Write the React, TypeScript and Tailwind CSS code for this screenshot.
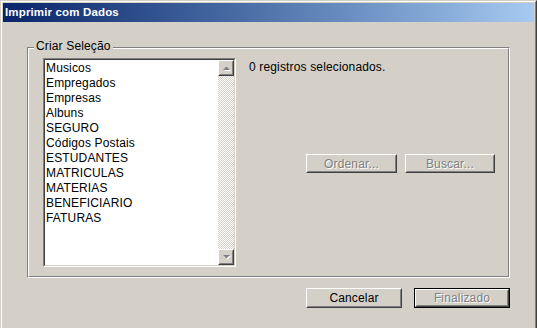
import React from 'react'

const tables = [
  'Musicos',
  'Empregados',
  'Empresas',
  'Albuns',
  'SEGURO',
  'Códigos Postais',
  'ESTUDANTES',
  'MATRICULAS',
  'MATERIAS',
  'BENEFICIARIO',
  'FATURAS',
]

// classic raised 3D button face
function Raised({ className, children }: { className: string; children: React.ReactNode }) {
  return (
    <div className={`border border-t-white border-l-white border-r-[#404040] border-b-[#404040] bg-[#d4d0c8] ${className}`}>
      <div className="h-full border border-t-transparent border-l-transparent border-r-[#808080] border-b-[#808080] flex items-center justify-center">
        {children}
      </div>
    </div>
  )
}

function Arrow({ up }: { up?: boolean }) {
  return (
    <svg width="7" height="5" viewBox="0 0 7 5" className="overflow-visible">
      <polygon points={up ? '4.5,1.5 8,5 1,5' : '1,1 8,1 4.5,4.5'} fill="#ffffff" />
      <polygon points={up ? '3.5,0.5 7,4 0,4' : '0,0 7,0 3.5,3.5'} fill="#808080" />
    </svg>
  )
}

export default function App() {
  return (
    <div className="w-[537px] h-[328px] overflow-hidden bg-[#d4d0c8] border-l border-t border-r border-l-[#d4d0c8] border-t-[#d4d0c8] border-r-[#404040] font-['Liberation_Sans',Arial,sans-serif] text-[12px] tracking-[0.15px] text-black">
      <div className="h-full border-l border-t border-r border-l-white border-t-white border-r-[#808080] p-px">
        {/* Title bar */}
        <div className="h-[19px] bg-linear-to-r from-[#0a246a] to-[#a6caf0] flex items-center pl-[2px]">
          <span className="text-white font-bold text-[11.5px] leading-none">Imprimir com Dados</span>
        </div>

        <div className="pl-[24px] pt-[25px]">
          {/* Group box */}
          <div className="relative w-[483px] h-[231px] border border-t-[#808080] border-l-[#808080] border-r-white border-b-white">
            <span className="absolute -top-[9px] left-[6px] px-[2px] bg-[#d4d0c8] leading-[15px]">Criar Seleção</span>
            <div className="h-full border border-t-white border-l-white border-r-[#808080] border-b-[#808080] flex pt-[9px] pl-[14px]">
              {/* List box */}
              <div className="w-[193px] h-[209px] border border-t-[#808080] border-l-[#808080] border-r-white border-b-white">
                <div className="h-full border border-t-[#404040] border-l-[#404040] border-r-[#d4d0c8] border-b-[#d4d0c8] bg-white flex">
                  <ul className="flex-1 leading-[15px] pl-px pt-px">
                    {tables.map((t) => (
                      <li key={t}>{t}</li>
                    ))}
                  </ul>
                  <div className="w-[16px] flex flex-col">
                    <Raised className="h-[16px]">
                      <Arrow up />
                    </Raised>
                    <div className="flex-1 bg-[repeating-conic-gradient(#d4d0c8_0_25%,#ffffff_0_50%)] bg-[length:2px_2px]" />
                    <Raised className="h-[16px]">
                      <Arrow />
                    </Raised>
                  </div>
                </div>
              </div>

              <div className="flex flex-col pl-[13px] pt-[2px]">
                <p className="leading-[15px]">0 registros selecionados.</p>
                <div className="flex gap-[8px] mt-[79px] pl-[57px]">
                  <Raised className="w-[91px] h-[19px]">
                    <span className="text-[#808080] [text-shadow:1px_1px_0_#fff]">Ordenar...</span>
                  </Raised>
                  <Raised className="w-[90px] h-[19px]">
                    <span className="text-[#808080] [text-shadow:1px_1px_0_#fff]">Buscar...</span>
                  </Raised>
                </div>
              </div>
            </div>
          </div>

          {/* Dialog buttons */}
          <div className="w-[483px] flex justify-end gap-[12px] mt-[10px]">
            <Raised className="w-[96px] h-[20px]">
              <span>Cancelar</span>
            </Raised>
            <div className="w-[96px] h-[20px] border border-black">
              <Raised className="h-full">
                <span className="text-[#808080] [text-shadow:1px_1px_0_#fff]">Finalizado</span>
              </Raised>
            </div>
          </div>
        </div>
      </div>
    </div>
  )
}
